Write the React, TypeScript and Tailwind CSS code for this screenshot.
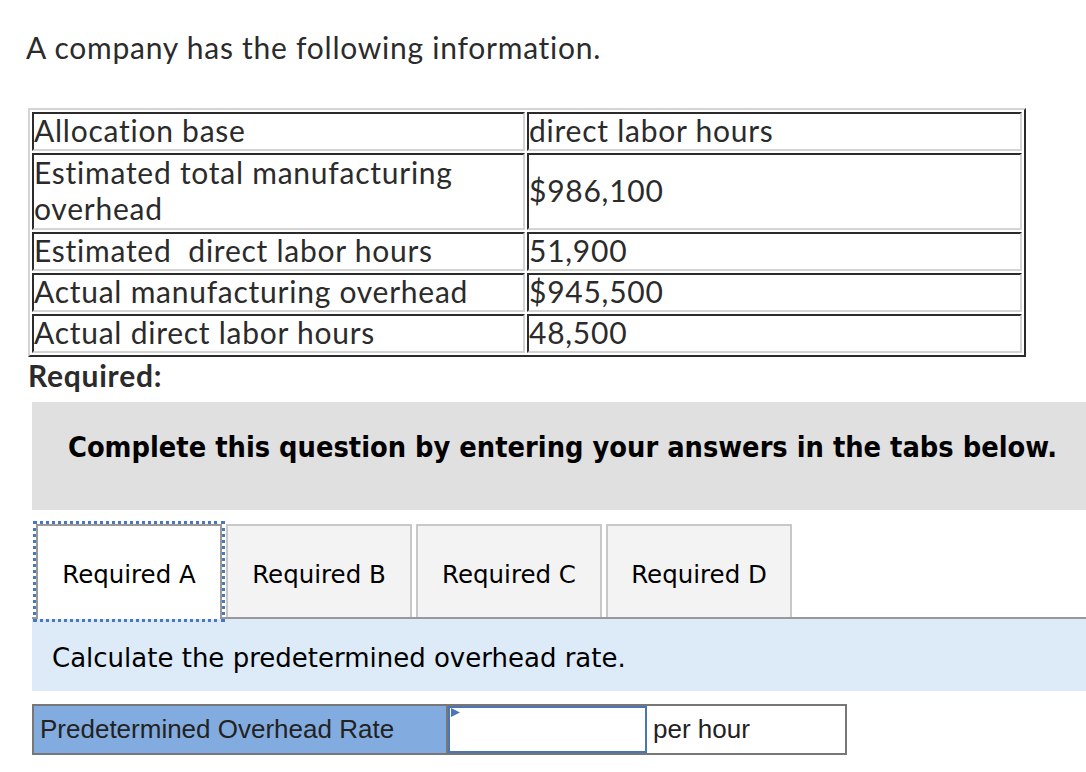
import React from 'react';

const rows: { label: string[]; value: string }[] = [
  { label: ['Allocation base'], value: 'direct labor hours' },
  { label: ['Estimated total manufacturing', 'overhead'], value: '$986,100' },
  { label: ['Estimated\u00a0 direct labor hours'], value: '51,900' },
  { label: ['Actual manufacturing overhead'], value: '$945,500' },
  { label: ['Actual direct labor hours'], value: '48,500' },
];

const tabs = ['Required A', 'Required B', 'Required C', 'Required D'];

// cell borders of an old-style border="1" table: dark top/left, light bottom/right
const cellCls =
  'border-2 border-t-[#2b2b2b] border-l-[#2b2b2b] border-b-[#d4d4d4] border-r-[#d4d4d4] p-0 pb-[2px] align-middle text-left';

const App: React.FC = () => {
  return (
    <div className="w-[1086px] h-[772px] overflow-hidden bg-white text-[#2b2b2b] font-['Lato',sans-serif] tracking-[0.75px]">
      <h1 className="pt-[29px] pl-[26px] text-[30px] leading-[36px] font-normal">
        A company has the following information.
      </h1>

      <table className="mt-[43px] ml-[28px] w-[998px] table-fixed border-separate border-spacing-[2px] border-2 border-t-[#d4d4d4] border-l-[#d4d4d4] border-r-[#2b2b2b] border-b-[#2b2b2b] text-[30px] leading-[33px]">
        <tbody>
          {rows.map((r, i) => (
            <tr key={i}>
              <td className={`${cellCls} w-[493px]`}>
                {r.label.map((l, j) => (
                  <div key={j} className={r.label.length > 1 ? 'leading-[35.5px]' : ''}>
                    {l}
                  </div>
                ))}
              </td>
              <td className={cellCls}>{r.value}</td>
            </tr>
          ))}
        </tbody>
      </table>

      <div className="mt-[3px] pl-[28px] text-[30px] leading-[30px] font-bold">Required:</div>

      <div className="mt-[12px] ml-[32px] h-[108px] bg-[#e0e0e0] pt-[28px] pl-[7px] text-center font-['DejaVu_Sans_Condensed','DejaVu_Sans',sans-serif] font-bold text-[28.7px] leading-[34px] tracking-normal text-black">
        Complete this question by entering your answers in the tabs below.
      </div>

      <div className="ml-[32px] mt-[14px] tracking-normal">
        <div className="flex items-start gap-[4px] pl-[4px] border-b-2 border-[#999]">
          {tabs.map((t, i) =>
            i === 0 ? (
              <div
                key={t}
                className="relative -mb-[2px] flex h-[95px] w-[186px] items-center justify-center border-2 border-b-0 border-[#999] bg-white pt-[6px] outline-3 outline-dotted outline-[#4a78c0] font-['DejaVu_Sans',sans-serif] text-[24.5px] text-black"
              >
                {t}
              </div>
            ) : (
              <div
                key={t}
                className="flex h-[93px] w-[186px] items-center justify-center border-2 border-b-0 border-[#c8c8c8] bg-[#f3f3f3] pt-[8px] font-['DejaVu_Sans',sans-serif] text-[24.5px] text-black"
              >
                {t}
              </div>
            )
          )}
        </div>

        <div className="h-[72px] bg-[#ddebf8] pl-[20px] pt-[24px] font-['DejaVu_Sans',sans-serif] text-[26px] leading-[30px] text-black">
          Calculate the predetermined overhead rate.
        </div>

        <div className="mt-[13px] flex h-[51px] font-['Liberation_Sans',Arial,sans-serif] text-[26px] text-[#222]">
          <div className="flex w-[416px] items-center border-2 border-[#777] bg-[#82acdf] pl-[6px]">
            Predetermined Overhead Rate
          </div>
          <div className="relative w-[199px] border-y-2 border-[#777]">
            <input
              type="text"
              aria-label="Predetermined Overhead Rate"
              className="block h-full w-full border-2 border-[#4a76b5] bg-white outline-none"
            />
            <svg className="absolute left-[3px] top-[2px]" width="10" height="10" viewBox="0 0 10 10">
              <polygon points="0,0 9,4.5 0,9" fill="#4a76b5" />
            </svg>
          </div>
          <div className="flex w-[200px] items-center border-2 border-l-0 border-[#777] pl-[6px]">per hour</div>
        </div>
      </div>
    </div>
  );
};

export default App;
